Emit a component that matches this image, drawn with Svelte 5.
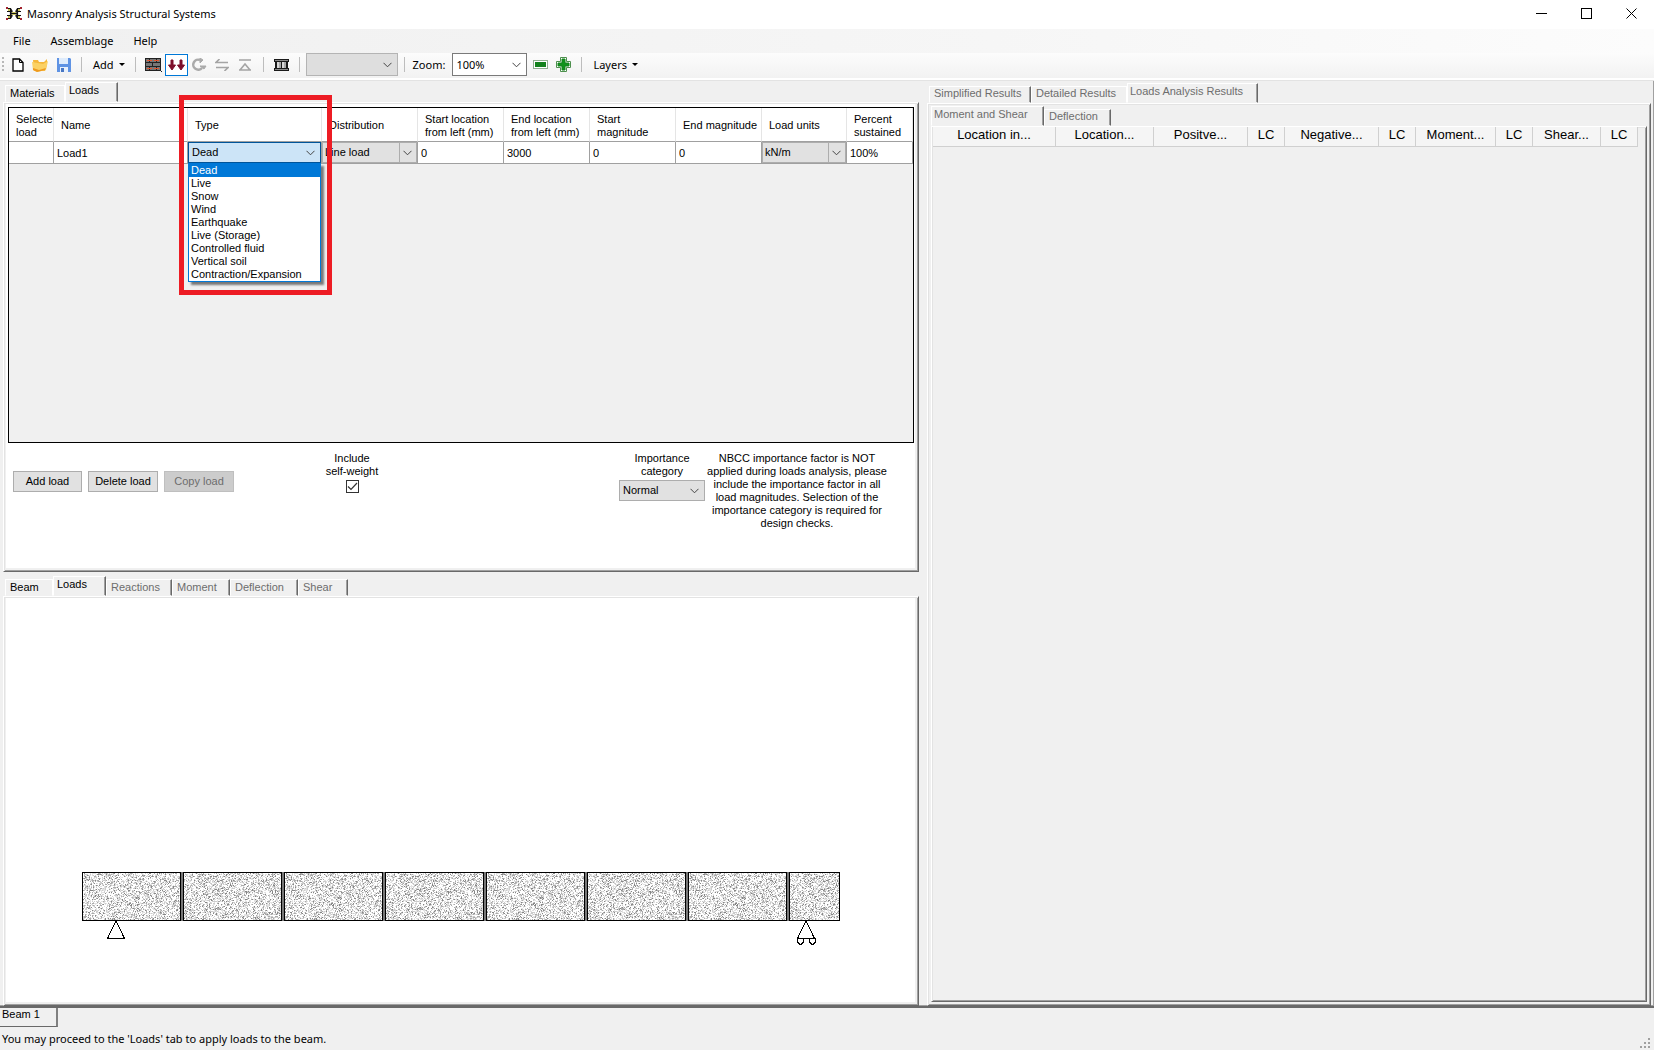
<script>
  const menus = ['File', 'Assemblage', 'Help'];
  const loadTypes = ['Dead', 'Live', 'Snow', 'Wind', 'Earthquake', 'Live (Storage)', 'Controlled fluid', 'Vertical soil', 'Contraction/Expansion'];
  const viewTabs = ['Beam', 'Loads', 'Reactions', 'Moment', 'Deflection', 'Shear'];
  const resultTabs = ['Simplified Results', 'Detailed Results', 'Loads Analysis Results'];
  const resultCols = [
    ['Location in...', 123], ['Location...', 98], ['Positve...', 94], ['LC', 37], ['Negative...', 94],
    ['LC', 37], ['Moment...', 80], ['LC', 37], ['Shear...', 68], ['LC', 37]
  ];
  let type = $state('Dead');
  let selfWeight = $state(true);

  // Masonry speckle: seeded so the texture is the same on every load.
  const shades = ['#e2e2e2', '#cccccc', '#aaaaaa', '#868686'];
  const limits = [0.2, 0.37, 0.49, 0.56];
  const tileW = 202;
  const tileH = 49;
  let seed = 7321;
  const rand = () => {
    seed = (seed * 1664525 + 1013904223) % 4294967296;
    return seed / 4294967296;
  };
  const speckle = shades.map(() => '');
  for (let y = 0; y < tileH; y++) {
    for (let x = 0; x < tileW; x++) {
      const r = rand();
      const i = limits.findIndex((l) => r < l);
      if (i >= 0) speckle[i] += `M${x} ${y}h1v1h-1z`;
    }
  }
  const joints = [0, 1, 2, 3, 4, 5, 6].map((i) => 99 + i * 101);
</script>

{#snippet chevron()}
  <svg class="chev" width="9" height="6" viewBox="0 0 9 6" aria-hidden="true"><path d="M.5 .8 4.5 4.8 8.5 .8" fill="none" stroke="#444" /></svg>
{/snippet}
{#snippet caret()}
  <svg width="6" height="3" viewBox="0 0 6 3" aria-hidden="true"><path d="M0 0h6L3 3z" fill="#000" /></svg>
{/snippet}

<div class="window">
  <header class="titlebar">
    <svg width="16" height="13" viewBox="0 0 16 13" aria-hidden="true">
      <path d="M1 1.500H4.500L6 4V9L4.500 11.500H1M15 1.500H11.500L10 4V9L11.500 11.500H15M1 4.500H6M1 8.500H6M10 4.500H15M10 8.500H15M4.500 2V11M11.500 2V11M5 6.500H11" fill="none" stroke="#111" stroke-width="1.200" />
      <path d="M2 2h2v2H2zM2 9h2v2H2zM12 2h2v2h-2zM12 9h2v2h-2zM6 5h4v1H6zM6 7h4v1H6z" fill="#c9c25a" />
      <path d="M0 0h2v2H0zM14 0h2v2h-2zM0 11h2v2H0zM14 11h2v2h-2z" fill="#a3222e" />
    </svg>
    <h1>Masonry Analysis Structural Systems</h1>
    <div class="winbtns">
      <button aria-label="Minimize"><svg width="11" height="11"><path d="M0 5.5h11" stroke="#000" /></svg></button>
      <button aria-label="Maximize"><svg width="11" height="11"><rect x=".5" y=".5" width="10" height="10" fill="none" stroke="#000" /></svg></button>
      <button aria-label="Close"><svg width="11" height="11"><path d="M.5 .5l10 10M10.500 .5l-10 10" stroke="#000" /></svg></button>
    </div>
  </header>

  <nav class="menubar">
    {#each menus as m}<button>{m}</button>{/each}
  </nav>

  <div class="toolbar" role="toolbar" aria-label="Main">
    <span class="handle"></span>
    <button class="icon" aria-label="New"><svg width="12" height="14"><path d="M1 1h6.500l3.500 3.500V13H1z" fill="#fff" stroke="#000" stroke-width="1.300" /><path d="M7.500 1v3.500H11" fill="none" stroke="#000" /></svg></button>
    <button class="icon" aria-label="Open"><svg width="17" height="14"><path d="M1 2h5l1 2h5l3-3v6l-2 6H2z" fill="#f5b73a" /><path d="M0 4l11 2 5-3-2 9-9 2-4-2z" fill="#fbd163" /><path d="M1 10l6 2 7-2-1 2-8 2-4-2z" fill="#ee9a1f" /></svg></button>
    <button class="icon" aria-label="Save"><svg width="14" height="14"><path d="M0 0h13l1 1v13H0z" fill="#5f93e4" /><path d="M2 0h9v6H2z" fill="#dfecfc" /><path d="M3 9h8v5H3z" fill="#e9f1fc" /><path d="M4 10h3v4H4z" fill="#4877c4" /></svg></button>
    <span class="sep"></span>
    <button class="drop">Add {@render caret()}</button>
    <span class="sep"></span>
    <button class="icon" aria-label="Masonry"><svg width="17" height="14" shape-rendering="crispEdges"><path d="M0 0h16v13H0z" fill="#222" /><path d="M1 1h3v3H1zM5 1h6v3H5zM12 1h3v3h-3zM1 5h6v3H1zM8 5h7v3H8zM1 9h3v3H1zM5 9h6v3H5zM12 9h3v3h-3z" fill="#777" /><path d="M2 2h5v1H2zM9 2h5v1H9zM2 10h5v1H2zM9 10h5v1H9z" fill="#e2532c" /><path d="M16 13h1v1h-1z" fill="#222" /></svg></button>
    <button class="icon on" aria-label="Loads" aria-pressed="true"><svg width="17" height="12"><path d="M3 1h2v5h2.500L4 11 .5 6H3zM12 1h2v5h2.500L13 11 9.500 6H12z" fill="#7d0f2b" stroke="#7d0f2b" /></svg></button>
    <button class="icon" aria-label="Rotate"><svg width="16" height="14"><path d="M9 2A5 5 0 1 0 11 10" fill="none" stroke="#aaa" stroke-width="2.500" /><path d="M9 8h6l-2 3-4-3zM9 0l3 2-3 3z" fill="#aaa" stroke="#aaa" /></svg></button>
    <button class="icon" aria-label="Swap"><svg width="14" height="12"><path d="M2 3.500h11M4.500 0 1 3.500h4M1 8.500h11M9.500 12 13 8.500H9" fill="none" stroke="#a4a4a4" stroke-width="1.600" /></svg></button>
    <button class="icon" aria-label="Support"><svg width="12" height="12"><path d="M0 1h12M1 11 6 5l5 6M0 11h12" fill="none" stroke="#a4a4a4" stroke-width="1.600" /></svg></button>
    <span class="sep"></span>
    <button class="icon" aria-label="Section"><svg width="15" height="12" shape-rendering="crispEdges"><path d="M0 0h15v3h-1v6h1v3H0V9h1V3H0z" fill="#1a1a1a" /><path d="M1 1h13v1H1zM1 10h13v1H1z" fill="#8a8a8a" /><path d="M3 3h4v6H3zM8 3h4v6H8z" fill="#d8d8d8" /><path d="M5 3h2v6H5zM10 3h2v6h-2z" fill="#a8a8a8" /></svg></button>
    <span class="sep"></span>
    <span class="combo blank"><select aria-label="Item" disabled><option></option></select>{@render chevron()}</span>
    <span class="sep"></span>
    <label for="zoom">Zoom:</label>
    <span class="combo zoom"><select id="zoom"><option>100%</option></select>{@render chevron()}</span>
    <button class="icon" aria-label="Zoom out"><svg width="15" height="9"><rect x=".5" y=".5" width="14" height="8" fill="#fff" stroke="#8fb08f" /><rect x="2" y="2" width="11" height="5" fill="#12821c" /></svg></button>
    <button class="icon" aria-label="Zoom in"><svg width="15" height="15"><path d="M4.500 .5h6v4h4v6h-4v4h-6v-4h-4v-6h4z" fill="#fff" stroke="#4d8f4d" /><path d="M6 2h3v4h4v3H9v4H6V9H2V6h4z" fill="#12921c" stroke="#12821c" /></svg></button>
    <span class="sep"></span>
    <button class="drop">Layers {@render caret()}</button>
  </div>

  <main>
    <div class="left">
      <section class="pane upper">
        <div class="tabs" role="tablist">
          <button role="tab" aria-selected="false" class="tab mat">Materials</button>
          <button role="tab" aria-selected="true" class="tab active lds">Loads</button>
        </div>
        <div class="page">
          <div class="sheet">
            <div class="frame">
              <table class="loads">
                <thead>
                  <tr>
                    <th class="c-sel">Selecte<br />load</th><th class="c-wide">Name</th><th class="c-wide">Type</th><th class="c-dist">Distribution</th>
                    <th class="c-num">Start location<br />from left (mm)</th><th class="c-num">End location<br />from left (mm)</th><th class="c-num">Start<br />magnitude</th>
                    <th class="c-num">End magnitude</th><th class="c-unit">Load units</th><th>Percent<br />sustained</th>
                  </tr>
                </thead>
                <tbody>
                  <tr>
                    <td></td>
                    <td><input aria-label="Name" value="Load1" /></td>
                    <td class="typecell">
                      <span class="combo open"><select aria-label="Type" bind:value={type}>{#each loadTypes as t}<option>{t}</option>{/each}</select>{@render chevron()}</span>
                      <ul role="listbox" aria-label="Load types">
                        {#each loadTypes as t}<li role="option" aria-selected={t === type}>{t}</li>{/each}
                      </ul>
                      <span class="marker"></span>
                    </td>
                    <td><span class="combo cell"><select aria-label="Distribution"><option>Line load</option></select>{@render chevron()}</span></td>
                    <td><input aria-label="Start location" value="0" /></td>
                    <td><input aria-label="End location" value="3000" /></td>
                    <td><input aria-label="Start magnitude" value="0" /></td>
                    <td><input aria-label="End magnitude" value="0" /></td>
                    <td><span class="combo cell"><select aria-label="Load units"><option>kN/m</option></select>{@render chevron()}</span></td>
                    <td><input aria-label="Percent sustained" value="100%" /></td>
                  </tr>
                </tbody>
              </table>
            </div>
            <div class="controls">
              <div class="btns">
                <button>Add load</button><button>Delete load</button><button disabled>Copy load</button>
              </div>
              <label class="self">Include<br />self-weight<span class="check"><input type="checkbox" bind:checked={selfWeight} /><svg width="11" height="9" viewBox="0 0 11 9" aria-hidden="true">{#if selfWeight}<path d="M1 4.500 4 7.500 10 1" fill="none" stroke="#333" stroke-width="1.200" />{/if}</svg></span></label>
              <div class="importance">
                <label for="imp">Importance<br />category</label>
                <span class="combo normal"><select id="imp"><option>Normal</option></select>{@render chevron()}</span>
              </div>
              <p>NBCC importance factor is NOT applied during loads analysis, please include the importance factor in all load magnitudes. Selection of the importance category is required for design checks.</p>
            </div>
          </div>
        </div>
      </section>

      <section class="pane lower">
        <div class="tabs" role="tablist">
          {#each viewTabs as t, i}
            <button role="tab" aria-selected={i === 1} class="tab v{i}" class:active={i === 1} class:muted={i > 1}>{t}</button>
          {/each}
        </div>
        <div class="page">
          <div class="sheet drawing">
            <svg width="760" height="75" viewBox="0 0 760 75" role="img" aria-label="Beam elevation" shape-rendering="crispEdges">
              <defs>
                <pattern id="masonry" width={tileW} height={tileH} patternUnits="userSpaceOnUse">
                  {#each speckle as d, i}<path {d} fill={shades[i]} />{/each}
                </pattern>
              </defs>
              <rect x="1.500" y=".5" width="757" height="48" fill="url(#masonry)" stroke="#000" />
              {#each joints as x}
                <rect {x} y="0" width="4" height="49" fill="#000" /><rect x={x + 1} y="0" width="2" height="49" fill="#777" />
              {/each}
              <g fill="none" stroke="#000">
                <path d="M35 49 26.500 66.500H43.500zM725 49 716.500 66.500H733.500z" />
                <path d="M716.500 66v4l2 2h2l2-2v-4M728.500 66v4l2 2h2l2-2v-4" />
              </g>
            </svg>
          </div>
        </div>
      </section>
    </div>

    <section class="pane right">
      <div class="tabs" role="tablist">
        {#each resultTabs as t, i}
          <button role="tab" aria-selected={i === 2} class="tab muted r{i}" class:active={i === 2}>{t}</button>
        {/each}
      </div>
      <div class="page outer">
        <div class="tabs inner" role="tablist">
          <button role="tab" aria-selected="true" class="tab muted active ms">Moment and Shear</button>
          <button role="tab" aria-selected="false" class="tab muted df">Deflection</button>
        </div>
        <div class="page results">
          <table>
            <colgroup>{#each resultCols as c}<col style="width: {c[1]}px" />{/each}</colgroup>
            <thead><tr>{#each resultCols as c}<th>{c[0]}</th>{/each}</tr></thead>
          </table>
        </div>
      </div>
    </section>
  </main>

  <div class="docs" role="tablist"><button role="tab" aria-selected="true">Beam 1</button></div>
  <footer>
    <span>You may proceed to the 'Loads' tab to apply loads to the beam.</span>
    <svg width="12" height="12" aria-hidden="true"><path d="M8 0h2v2H8zM4 4h2v2H4zM8 4h2v2H8zM0 8h2v2H0zM4 8h2v2H4zM8 8h2v2H8z" fill="#a0a0a0" /></svg>
  </footer>
</div>

<style>
  :global(body) { margin: 0; background: #f0f0f0; }
  .window { min-height: 100vh; display: flex; flex-direction: column; box-sizing: border-box; color: #000; background: #f0f0f0; font: 11px/13px "Liberation Sans", sans-serif; }
  .window * { box-sizing: border-box; }
  button, select, input { font: inherit; color: inherit; margin: 0; padding: 0; border: 0; background: none; border-radius: 0; }
  .titlebar, .menubar, .toolbar, footer { font-family: "Noto Sans", sans-serif; font-size: 11px; line-height: 16px; display: flex; align-items: center; }
  .titlebar { height: 29px; background: #fff; padding: 0 0 2px 6px; gap: 5px; }
  h1 { font: inherit; margin: 0; flex: 1; }
  .winbtns { display: flex; }
  .winbtns button { width: 45px; height: 27px; display: grid; place-items: center; }
  .menubar { height: 24px; padding-left: 13px; gap: 20px; background: linear-gradient(90deg, #f0f0f0, #f6f6f6 60%, #fcfcfc); }
  .toolbar { height: 25px; background: linear-gradient(#fcfcfc, #f2f2f2); padding: 0 0 2px 2px; }
  .toolbar button { height: 22px; }
  .toolbar svg { display: block; }
  .icon { width: 23px; display: grid; place-items: center; }
  .on { border: 1px solid #0078d7; background: #fff; }
  .handle { width: 2px; height: 15px; margin-right: 2px; background: repeating-linear-gradient(#b8b8b8 0 2px, transparent 2px 4px); }
  .sep { width: 1px; height: 15px; background: #bdbdbd; margin: 0 6px; }
  .drop { display: flex; align-items: center; gap: 5px; padding: 0 4px 0 5px; }
  .toolbar label { padding: 0 7px 0 2px; }
  .combo { position: relative; display: flex; align-items: center; }
  .combo select { appearance: none; width: 100%; height: 100%; opacity: 1; outline: 0; }
  .chev { position: absolute; right: 5px; top: calc(50% - 3px); pointer-events: none; }
  .blank { width: 92px; height: 23px; border: 1px solid #b4b4b4; background: #dedede; }
  .zoom { width: 75px; height: 23px; border: 1px solid #7a7a7a; background: #fff; margin-right: 2px; }
  .zoom select { padding-left: 3px; }
  main { flex: 1; display: grid; grid-template-columns: 916fr 724fr; gap: 8px; padding: 0 3px; border-top: 2px solid #fff; border-bottom: 2px solid #696969; box-shadow: inset 0 1px #e3e3e3, inset -1px -1px #a0a0a0; }
  .left { display: grid; grid-template-rows: 492fr 434fr; min-width: 0; }
  .pane { display: flex; flex-direction: column; min-width: 0; }
  .tabs { display: flex; align-items: flex-end; padding: 2px 0 0 2px; }
  .lower .tabs { padding-top: 4px; }
  .right .tabs { padding-top: 3px; }
  .right .inner { padding: 1px 0 0; }
  .tab { height: 17px; text-align: left; padding: 0 0 1px 4px; border: solid; border-width: 1px; border-color: #fff #696969 transparent #fff; box-shadow: inset -1px 0 #a0a0a0; white-space: nowrap; }
  .tab.active { height: 20px; padding: 0 0 3px 3px; }
  .tab.muted { color: #6d6d6d; }
  .right .tab { padding-bottom: 3px; }
  .right .tab.active { padding: 0 0 4px 2px; }
  .mat, .v0 { border-right-color: #fff; box-shadow: none; }
  .mat { width: 60px; }
  .lds { width: 53px; }
  .v0 { width: 48px; } .v1 { width: 53px; } .v2 { width: 66px; } .v3 { width: 58px; } .v4 { width: 68px; } .v5 { width: 50px; }
  .r0 { width: 102px; } .r1 { width: 96px; border-right-color: #fff; box-shadow: none; } .r2 { width: 131px; }
  .ms { width: 113px; } .df { width: 67px; }
  .page { flex: 1; display: flex; flex-direction: column; min-width: 0; border: 1px solid; border-color: #fff #696969 #696969 #fff; box-shadow: inset 1px 1px #e3e3e3, inset -1px -1px #a0a0a0; padding: 1px 3px 3px 2px; }
  .sheet { flex: 1; background: #fff; display: flex; flex-direction: column; }
  .outer { padding: 1px 3px 3px; }
  .results { padding: 0 1px 1px; }
  .frame { flex: 1; margin: 3px 1px 0 2px; border: 1px solid #000; background: #f0f0f0; }
  table { border-collapse: separate; border-spacing: 0; table-layout: fixed; }
  .loads { width: 100%; background: #fff; }
  .loads th { font-weight: 400; text-align: left; height: 34px; padding: 2px 0 0 7px; border-right: 1px solid #e5e5e5; border-bottom: 1px solid #a0a0a0; white-space: nowrap; }
  .loads .c-sel { width: 45px; }
  .c-wide { width: 134px; } .c-dist { width: 96px; } .c-num { width: 86px; } .c-unit { width: 85px; }
  .loads td { height: 22px; padding: 0; border-right: 1px solid #a0a0a0; border-bottom: 1px solid #a0a0a0; }
  .loads input { display: block; width: 100%; height: 21px; padding-left: 3px; }
  .typecell { position: relative; }
  .open { height: 21px; border: 1px solid #005499; background: #cce4f7; }
  .open select { padding-left: 3px; }
  .cell { height: 21px; border: 1px solid #adadad; background: #e1e1e1; }
  .cell select { padding-left: 2px; border-right: 16px solid #e1e1e1; box-shadow: inset -1px 0 #adadad; }
  .cell .chev { right: 4px; }
  ul { position: absolute; z-index: 2; left: 0; top: 21px; width: 133px; margin: 0; padding: 0; list-style: none; background: #fff; border: 1px solid #0078d7; box-shadow: 3px 3px 2px rgba(0, 0, 0, .5); }
  li { padding-left: 2px; height: 13px; }
  li[aria-selected="true"] { background: #0078d7; color: #fff; }
  .marker { position: absolute; z-index: 3; left: -9px; top: -47px; width: 153px; height: 200px; border: 5px solid #ed1c24; pointer-events: none; }
  .controls { display: flex; align-items: flex-start; min-height: 125px; padding: 9px 26px 0 7px; text-align: center; }
  .btns { display: flex; gap: 6px; padding-top: 19px; }
  .btns button { width: 70px; height: 21px; border: 1px solid #adadad; background: #e1e1e1; }
  .btns button:first-child { width: 69px; }
  .btns button:disabled { background: #ccc; border-color: #bfbfbf; color: #6d6d6d; }
  .self { width: 60px; margin-left: 88px; white-space: nowrap; }
  .check { position: relative; display: grid; place-items: center; width: 13px; height: 13px; margin: 2px auto 0; border: 1px solid #333; background: #fff; }
  .check input { position: absolute; inset: 0; opacity: 0; }
  .importance { width: 86px; margin-left: auto; }
  .normal { height: 21px; margin-top: 2px; border: 1px solid #adadad; background: #e1e1e1; }
  .normal select { padding-left: 3px; }
  .controls p { width: 184px; margin: 0; }
  .drawing { align-items: center; justify-content: flex-end; padding-bottom: 55px; }
  .results table { width: 705px; }
  .results th { font: 13px/15px "Liberation Sans", sans-serif; height: 20px; padding: 0 0 4px; background: #f5f5f5; border-right: 1px solid #d0d0d0; border-bottom: 1px solid #d0d0d0; white-space: nowrap; text-align: center; }
  .docs { height: 19px; }
  .docs button { width: 58px; height: 19px; text-align: left; padding: 0 0 5px 2px; border-right: 2px solid #808080; border-bottom: 1px solid #696969; }
  footer { height: 23px; padding: 0 2px; justify-content: space-between; }
  footer svg { align-self: flex-end; }
</style>
